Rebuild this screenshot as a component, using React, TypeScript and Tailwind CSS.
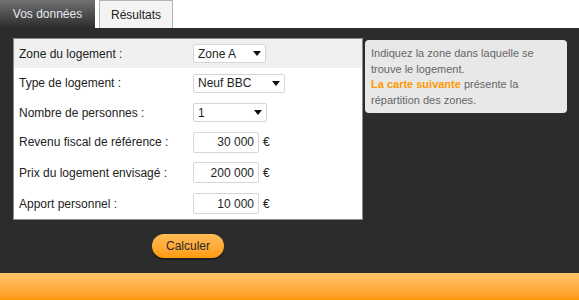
import React from "react";

const Arrow = () => (
  <svg width="8" height="5" viewBox="0 0 8 5" className="shrink-0">
    <path d="M0 0 L8 0 L4 5 Z" fill="#111" />
  </svg>
);

function Select({ value, width }: { value: string; width: string }) {
  return (
    <div
      className={`${width} h-[19px] flex items-center justify-between border border-[#d6d6d6] rounded-[2px] bg-white pl-[4px] pr-[4px] text-[12px] text-[#1e1e1e]`}
    >
      <span>{value}</span>
      <Arrow />
    </div>
  );
}

function NumInput({ value }: { value: string }) {
  return (
    <div className="flex items-center gap-[4px]">
      <div className="w-[66px] h-[21px] flex items-center justify-end border border-[#d6d6d6] rounded-[2px] bg-white pr-[4px] text-[12px] text-[#1e1e1e]">
        {value}
      </div>
      <span className="text-[12px] text-[#1e1e1e]">€</span>
    </div>
  );
}

function Row({
  label,
  h,
  bg,
  children,
}: {
  label: string;
  h: string;
  bg?: string;
  children: React.ReactNode;
}) {
  return (
    <div className={`flex items-center ${h} ${bg ?? "bg-white"}`}>
      <div className="w-[179px] pl-[5px] text-[12px] text-[#222]">{label}</div>
      {children}
    </div>
  );
}

export default function App() {
  return (
    <div
      className="w-[579px] h-[300px] flex flex-col bg-white overflow-hidden"
      style={{ fontFamily: '"Liberation Sans", Arial, sans-serif' }}
    >
      <div className="h-[28px] flex items-end gap-[4px] shrink-0">
        <div className="w-[95px] h-[28px] flex items-center justify-center bg-gradient-to-b from-[#727272] to-[#2d2d2d] text-[12px] text-[#e4e8f2]">
          Vos données
        </div>
        <div className="w-[74px] h-[28px] flex items-center justify-center bg-[#f3f3f3] border border-b-0 border-[#b4b4b4] text-[12px] text-[#222]">
          Résultats
        </div>
      </div>
      <div className="flex-1 flex flex-col bg-[#2c2c2c]">
        <div className="flex items-start pt-[10px] pl-[13px]">
          <div className="w-[350px] border border-[#8c8c8c] bg-white flex flex-col">
            <Row label="Zone du logement :" h="h-[29px]" bg="bg-[#f0f0f0]">
              <Select value="Zone A" width="w-[73px]" />
            </Row>
            <Row label="Type de logement :" h="h-[30px]">
              <Select value="Neuf BBC" width="w-[92px]" />
            </Row>
            <Row label="Nombre de personnes :" h="h-[29px]">
              <Select value="1" width="w-[74px]" />
            </Row>
            <Row label="Revenu fiscal de référence :" h="h-[30px]">
              <NumInput value="30 000" />
            </Row>
            <Row label="Prix du logement envisagé :" h="h-[31px]">
              <NumInput value="200 000" />
            </Row>
            <Row label="Apport personnel :" h="h-[31px]">
              <NumInput value="10 000" />
            </Row>
          </div>
          <div className="ml-[2px] mt-[2px] w-[202px] h-[73px] rounded-[4px] bg-[#e8e8e8] pl-[6px] pt-[6px] text-[11px] leading-[15.5px] text-[#666]">
            Indiquez la zone dans laquelle se
            <br />
            trouve le logement.
            <br />
            <span className="font-bold text-[#ff9900]">La carte suivante</span> présente la
            <br />
            répartition des zones.
          </div>
        </div>
        <div className="pl-[152px] mt-[14px]">
          <div className="w-[72px] h-[24px] rounded-full bg-gradient-to-b from-[#ffbd55] to-[#ff9a05] flex items-center justify-center text-[12px] text-[#2a2a2a] shadow-[0_2px_1px_rgba(0,0,0,0.35)]">
            Calculer
          </div>
        </div>
      </div>
      <div className="h-[27px] shrink-0 bg-gradient-to-b from-[#ffc46a] to-[#ff9900]" />
    </div>
  );
}
